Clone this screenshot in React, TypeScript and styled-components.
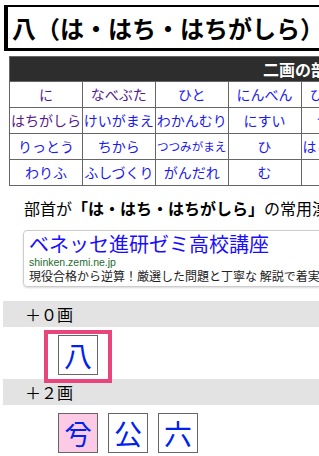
import React from "react";
import styled, { createGlobalStyle } from "styled-components";

const Global = createGlobalStyle`
  html, body { margin: 0; padding: 0; overflow: hidden; background: #fff; }
  body { font-family: "Noto Sans CJK JP", "Noto Sans", sans-serif; color: #000; }
`;

const Page = styled.div`
  padding-top: 5px;
  width: 319px;
  overflow: hidden;
`;

const Title = styled.h1`
  margin: 0 0 0 4px;
  width: 420px;
  box-sizing: border-box;
  border-left: 4px solid #000;
  border-top: 2px solid #000;
  border-bottom: 3px solid #000;
  padding-left: 4px;
  font-size: 24px;
  font-weight: bold;
  line-height: 41px;
  white-space: nowrap;
`;

const Table = styled.table`
  margin: 5px 0 0 9px;
  width: 584px;
  table-layout: fixed;
  border-collapse: collapse;
`;

const Head = styled.th`
  background: #2d2d2d;
  color: #fff;
  font-size: 16px;
  font-weight: bold;
  height: 24px;
  padding: 0 0 0 4px;
  line-height: 24px;
  border: 1px solid #666;
`;

const Cell = styled.td<{ $visited?: boolean; $small?: boolean }>`
  border: 1px solid #666;
  height: 25px;
  padding: 0;
  text-align: center;
  white-space: nowrap;
  font-size: ${(p) => (p.$small ? "11.6px" : "14px")};
  color: ${(p) => (p.$visited ? "#551a8b" : "#1a1aee")};
  line-height: 25px;
`;

const Lead = styled.p`
  margin: 10px 0 0 24px;
  font-size: 16px;
  line-height: 24px;
  white-space: nowrap;
`;

const Ad = styled.div`
  margin: 10px 0 0 23px;
  width: 360px;
  height: 57px;
  box-sizing: border-box;
  border: 1px solid #ccc;
  border-radius: 4px;
  box-shadow: 0 1px 2px rgba(0, 0, 0, 0.15);
  padding: 0 0 0 5px;
  white-space: nowrap;
  overflow: hidden;
`;

const AdTitle = styled.div`
  font-size: 20px;
  line-height: 25px;
  color: #1a0dff;
`;

const AdUrl = styled.div`
  font-family: "Liberation Sans", Arial, sans-serif;
  font-size: 10.5px;
  line-height: 12px;
  color: #1e6b2e;
`;

const AdDesc = styled.div`
  margin-top: 1px;
  font-size: 12px;
  line-height: 13px;
  color: #222;
`;

const Band = styled.div<{ $first?: boolean }>`
  margin: ${(p) => (p.$first ? "14px" : "0")} 0 0 3px;
  height: 26px;
  background: #e3e3e3;
  padding-left: 22px;
  font-size: 16px;
  line-height: 26px;
`;

const KanjiRow = styled.div`
  display: flex;
  gap: 10px;
  padding: 8px 0 4px 58px;
`;

const KanjiBox = styled.div<{ $pink?: boolean; $current?: boolean }>`
  position: relative;
  width: 40px;
  height: 40px;
  box-sizing: border-box;
  border: 1px solid #666;
  background: ${(p) => (p.$pink ? "#fdcae5" : "#fff")};
  color: #0022ee;
  font-size: 28px;
  line-height: 38px;
  text-align: center;
  &::after {
    content: "";
    display: ${(p) => (p.$current ? "block" : "none")};
    position: absolute;
    left: -15px;
    right: -15px;
    top: -6px;
    bottom: -9px;
    border: 4px solid #e8457c;
  }
`;

const rows: { t: string; v?: boolean; s?: boolean }[][] = [
  [{ t: "に", v: true }, { t: "なべぶた", v: true }, { t: "ひと" }, { t: "にんべん" }, { t: "ひとやね" }, { t: "ひとあし" }, { t: "いる" }, { t: "はち" }],
  [{ t: "はちがしら", v: true }, { t: "けいがまえ" }, { t: "わかんむり" }, { t: "にすい" }, { t: "つくえ" }, { t: "うけばこ" }, { t: "かたな" }, { t: "じゅう" }],
  [{ t: "りっとう" }, { t: "ちから" }, { t: "つつみがまえ", s: true }, { t: "ひ" }, { t: "はこがまえ" }, { t: "かくしがまえ", s: true }, { t: "ぼく" }, { t: "また" }],
  [{ t: "わりふ" }, { t: "ふしづくり" }, { t: "がんだれ" }, { t: "む" }, { t: "また" }, { t: "" }, { t: "" }, { t: "" }],
];

export default function App() {
  return (
    <Page>
      <Global />
      <Title>八（は・はち・はちがしら）</Title>
      <Table>
        <thead>
          <tr>
            <Head colSpan={8}>二画の部首</Head>
          </tr>
        </thead>
        <tbody>
          {rows.map((r, i) => (
            <tr key={i}>
              {r.map((c, j) => (
                <Cell key={j} $visited={c.v} $small={c.s}>
                  {c.t}
                </Cell>
              ))}
            </tr>
          ))}
        </tbody>
      </Table>
      <Lead>
        部首が<b>「は・はち・はちがしら」</b>の常用漢字
      </Lead>
      <Ad>
        <AdTitle>ベネッセ進研ゼミ高校講座</AdTitle>
        <AdUrl>shinken.zemi.ne.jp</AdUrl>
        <AdDesc>現役合格から逆算！厳選した問題と丁寧な 解説で着実に力をつける</AdDesc>
      </Ad>
      <Band $first>＋０画</Band>
      <KanjiRow>
        <KanjiBox $current>八</KanjiBox>
      </KanjiRow>
      <Band>＋２画</Band>
      <KanjiRow>
        <KanjiBox $pink>兮</KanjiBox>
        <KanjiBox>公</KanjiBox>
        <KanjiBox>六</KanjiBox>
      </KanjiRow>
    </Page>
  );
}
